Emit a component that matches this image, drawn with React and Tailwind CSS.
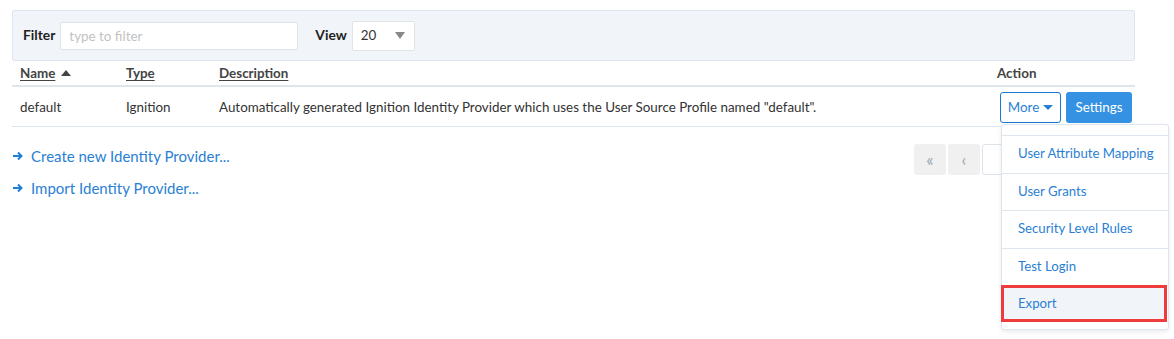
const items = ['User Attribute Mapping', 'User Grants', 'Security Level Rules', 'Test Login'];

const Arrow = () => (
  <svg width="12" height="10" viewBox="0 0 12 10" className="mr-[7px]">
    <path d="M1 5h8.5M6 1.5L9.5 5 6 8.5" fill="none" stroke="#1f7fd6" strokeWidth="2" />
  </svg>
);

const App = () => {
  return (
    <main
      className="relative h-[339px] w-[1174px] overflow-hidden bg-white text-[13.4px] text-[#333]"
      style={{ fontFamily: 'Lato, "Open Sans", sans-serif' }}
    >
      <div className="ml-3 w-[1123px] pt-[10px]">
        <div className="flex h-[51px] items-center rounded-[2px] border border-[#dfe5ec] bg-[#f1f5f9] pl-[10px]">
          <span className="text-[13.8px] font-bold text-[#222]">Filter</span>
          <input
            className="ml-[5px] h-[28px] w-[238px] rounded-[2px] border border-[#e0e4e8] bg-white px-2 text-[13.4px] outline-none placeholder:text-[#c2c2c2]"
            placeholder="type to filter"
          />
          <span className="ml-[17px] text-[13.8px] font-bold text-[#222]">View</span>
          <div className="ml-[5px] flex h-[30px] w-[63px] items-center justify-between rounded-[2px] border border-[#e0e4e8] bg-white pl-2 pr-[9px]">
            <span>20</span>
            <span className="h-0 w-0 border-x-[5px] border-t-[7px] border-x-transparent border-t-[#888]" />
          </div>
        </div>

        <div className="flex h-[26px] items-center border-b-2 border-[#dfe5ec] font-bold text-[#444]">
          <div className="flex w-[106px] items-center pl-2">
            <span className="underline underline-offset-2">Name</span>
            <span className="ml-[6px] h-0 w-0 border-x-[5px] border-b-[6px] border-x-transparent border-b-[#444]" />
          </div>
          <div className="w-[93px] pl-2">
            <span className="underline underline-offset-2">Type</span>
          </div>
          <div className="flex-1 pl-2">
            <span className="underline underline-offset-2">Description</span>
          </div>
          <div className="w-[146px] pl-2">Action</div>
        </div>

        <div className="flex h-[40px] items-center border-b border-[#dfe5ec] pt-[2px]">
          <div className="w-[106px] pl-2">default</div>
          <div className="w-[93px] pl-2">Ignition</div>
          <div className="flex-1 pl-2">
            Automatically generated Ignition Identity Provider which uses the User Source Profile named "default".
          </div>
          <div className="flex w-[146px] gap-[5px] pl-[11px]">
            <button className="flex h-[31px] w-[61px] items-center justify-center gap-[4px] rounded-[3px] border border-[#1b78d0] bg-white text-[#2a7fd4]">
              More
              <span className="h-0 w-0 border-x-[5px] border-t-[5px] border-x-transparent border-t-[#2a7fd4]" />
            </button>
            <button className="h-[31px] w-[66px] rounded-[3px] bg-[#3592e3] text-white">Settings</button>
          </div>
        </div>

        <div className="flex justify-between pt-[19px]">
          <div className="flex flex-col gap-[12px] text-[15px] text-[#2a7fd4]">
            <div className="flex h-[20px] items-center">
              <Arrow />
              Create new Identity Provider...
            </div>
            <div className="flex h-[20px] items-center">
              <Arrow />
              Import Identity Provider...
            </div>
          </div>
          <div className="mr-[87px] -mt-[2px] flex h-[31px] gap-[2px] text-[17px] text-[#9aa3ad]">
            <div className="flex w-[32px] items-center justify-center rounded-[3px] bg-[#f0f0f0]">«</div>
            <div className="flex w-[32px] items-center justify-center rounded-[3px] bg-[#f0f0f0]">‹</div>
            <div className="w-[66px] rounded-[3px] border border-[#dde3ea] bg-white" />
          </div>
        </div>
      </div>

      <div className="absolute left-[1001px] top-[124px] w-[168px] rounded-[3px] border border-[#dfe5ec] bg-white pb-[7px] pt-[10px] text-[13.2px] text-[#2a7fd4] shadow-[0_2px_4px_rgba(0,0,0,0.08)]">
        {items.map((t) => (
          <div key={t} className="flex h-[37.5px] items-center whitespace-nowrap border-t border-[#dfe5ec] pl-[16px]">
            {t}
          </div>
        ))}
        <div className="flex h-[37px] items-center border-[3px] border-[#ee3b3b] bg-[#f1f5f9] pl-[14px] -ml-px mr-[1px]">
          Export
        </div>
      </div>
    </main>
  );
};

export default App;
